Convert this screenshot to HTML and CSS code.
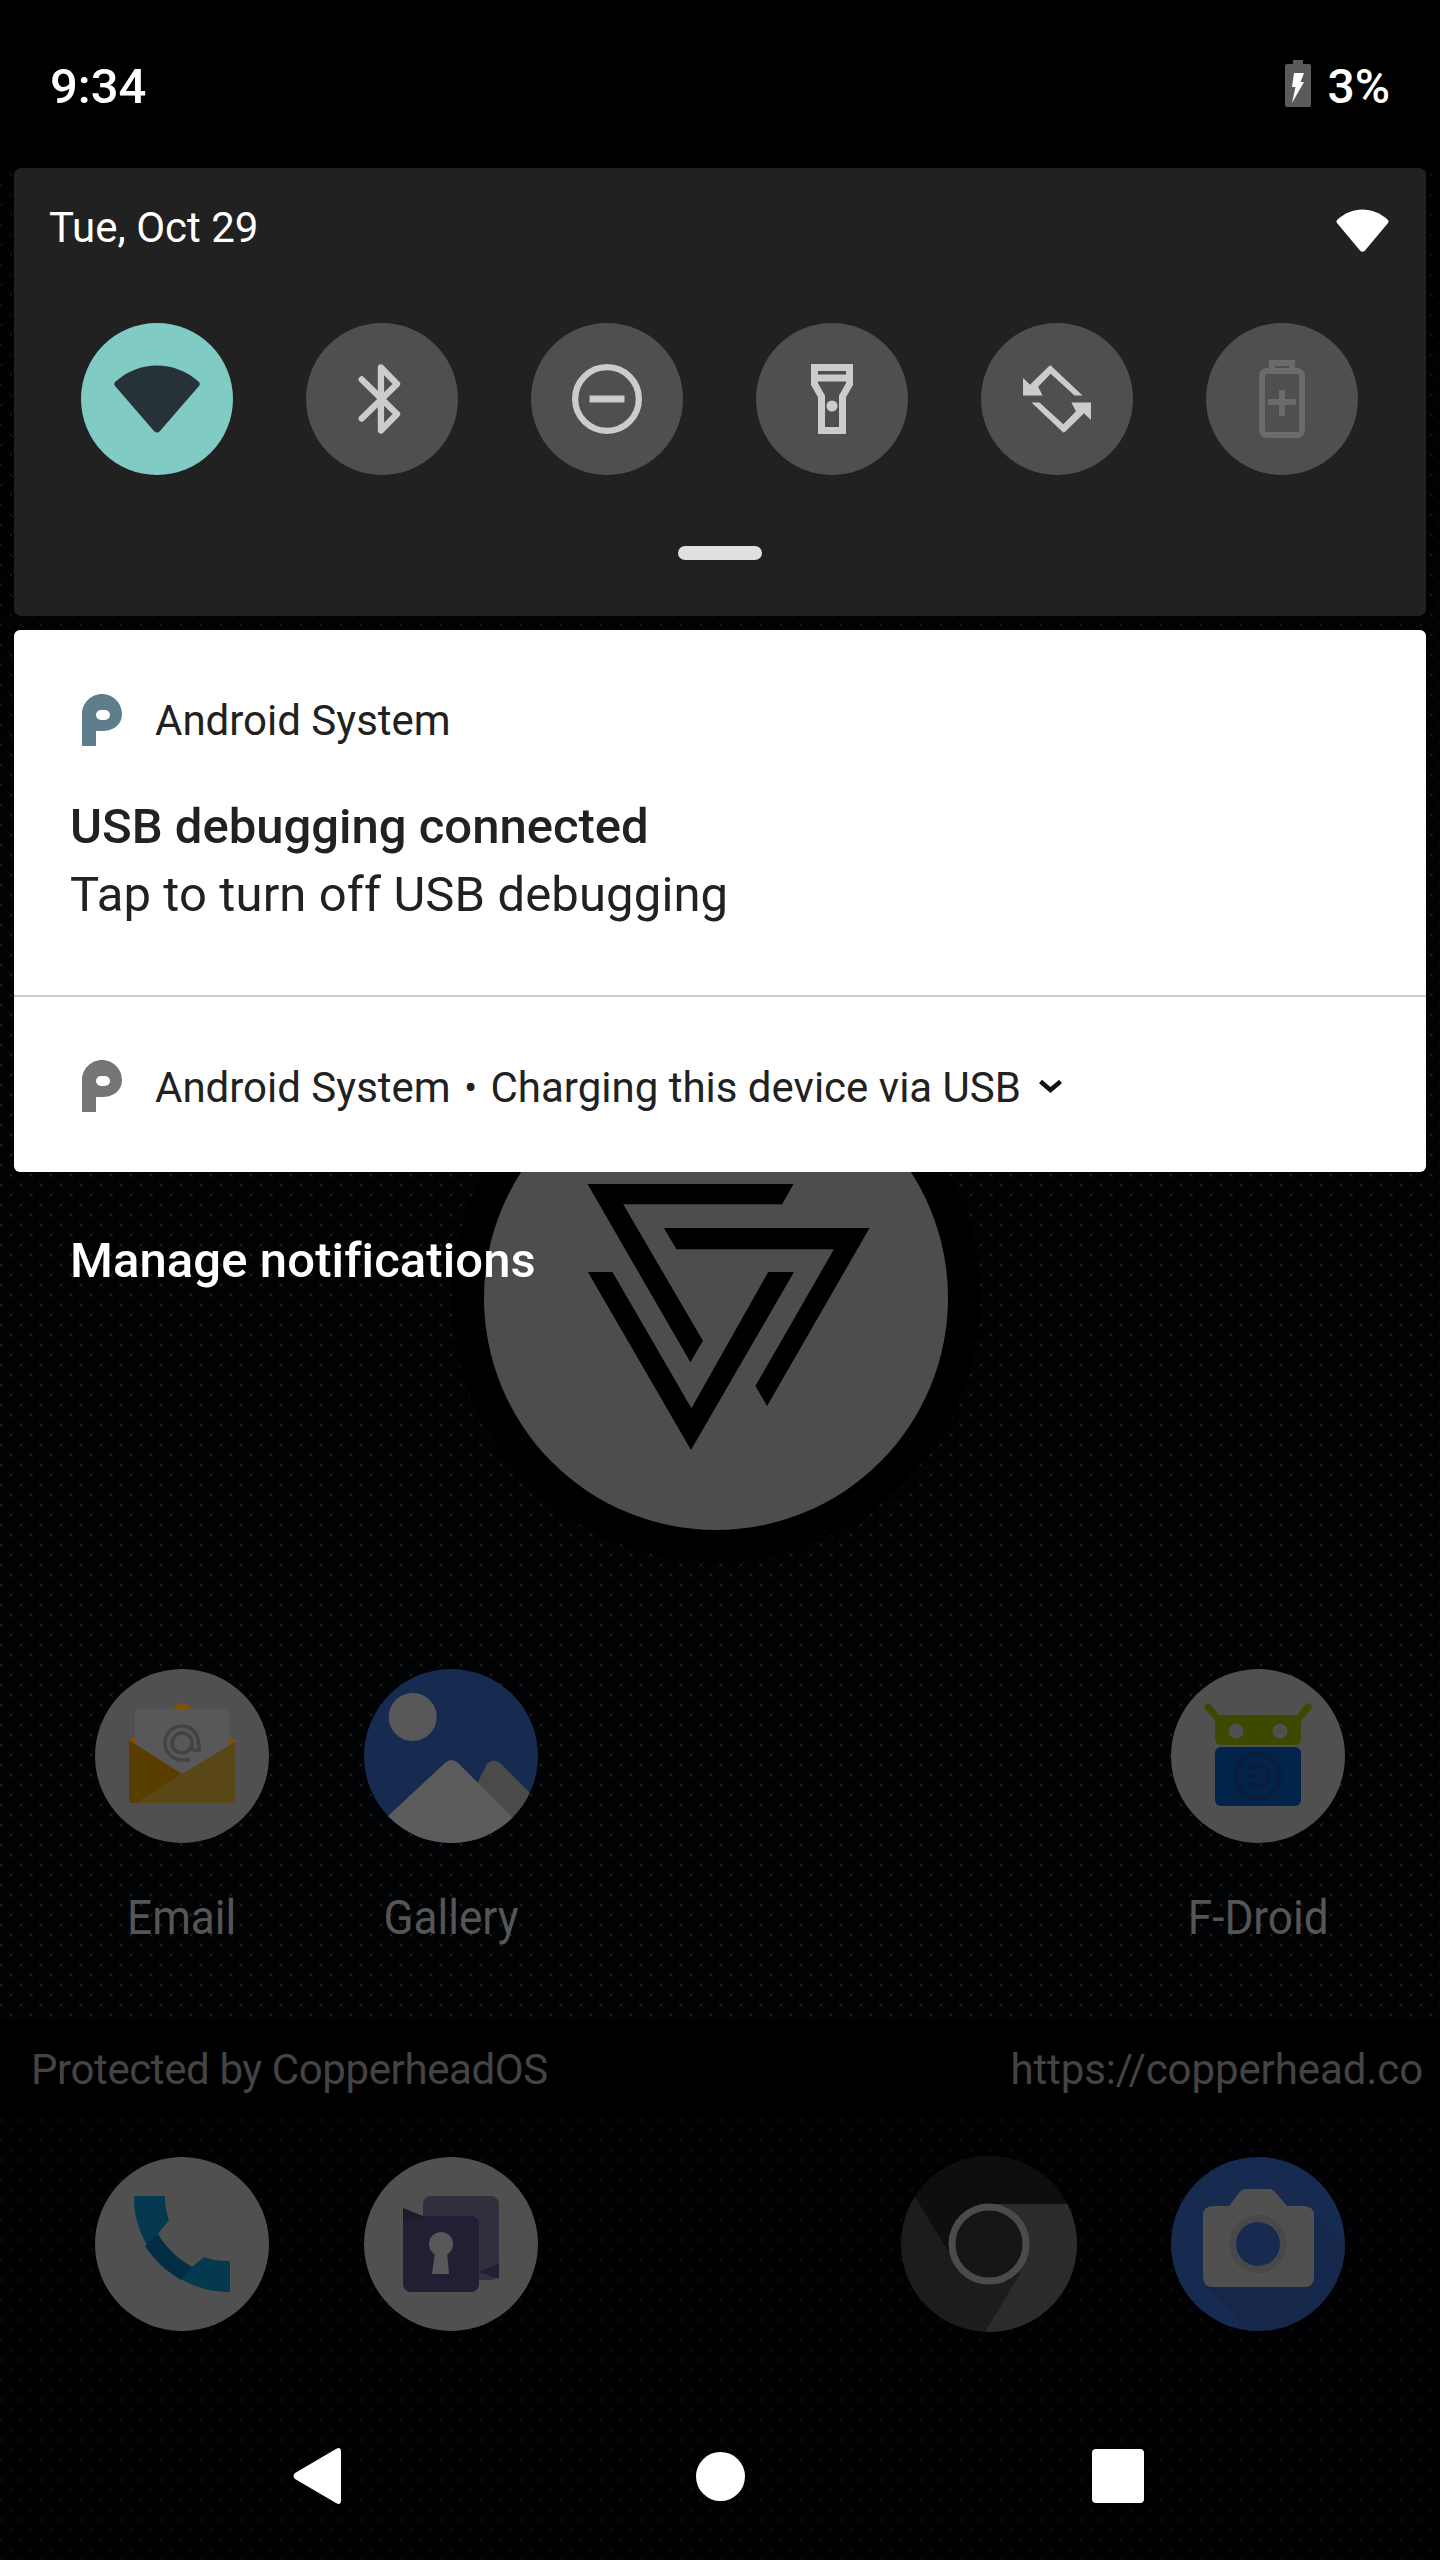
FILE: index.html
```html
<!DOCTYPE html>
<html lang="en">
<head>
<meta charset="utf-8">
<title>Notification shade</title>
<link rel="stylesheet" href="styles.css">
</head>
<body>
<div class="screen">
  <div class="home">
    <div class="wall">
      <div class="logo-ring">
        <svg class="logo" viewBox="484 1066 464 464" width="464" height="464">
          <polygon points="587.5,1184 793.6,1184 782.1,1204.3 623.2,1204.3 702.9,1340.7 690.4,1362.3"/>
          <polygon points="663.9,1228 869.6,1228 767.1,1406 755.4,1386 833.9,1249.3 676.4,1249.3"/>
          <polygon points="587.9,1272 612.5,1272 691.4,1408.3 768.2,1272 794,1272 691,1450"/>
        </svg>
      </div>
      <div class="app-row">
        <div class="app">
          <svg class="app-icon" viewBox="0 0 174 174" width="174" height="174">
            <circle cx="87" cy="87" r="87" fill="#505050"/>
            <path d="M34 72 L84 35 Q87 33 90 35 L140 72 V80 H34 Z" fill="#875000"/>
            <rect x="40" y="40" width="94" height="80" rx="5" fill="#585858"/>
            <circle cx="87" cy="74" r="10" fill="none" stroke="#434343" stroke-width="3.5"/>
            <path d="M97 74 v4 q0 5 7 3 q0 -24 -17 -24 a17 17 0 0 0 0 34 h8" fill="none" stroke="#434343" stroke-width="3.5"/>
            <path d="M34 71 L87 105 L41 134 H38 Q34 134 34 130 Z" fill="#5a3e00"/>
            <path d="M140 73 V130 Q140 134 136 134 H41 L87 105 Z" fill="#5a4716"/>
          </svg>
          <span class="app-label">Email</span>
        </div>
        <div class="app">
          <svg class="app-icon" viewBox="0 0 174 174" width="174" height="174">
            <defs><clipPath id="gal"><circle cx="87" cy="87" r="87"/></clipPath></defs>
            <g clip-path="url(#gal)">
              <rect width="174" height="174" fill="#172b50"/>
              <circle cx="48.7" cy="48" r="24" fill="#585858"/>
              <path d="M123 95 Q130 88 137 95 L190 148 V180 H80 Z" fill="#4a4a4a"/>
              <path d="M81 94 Q87.500 88 94 94 L160 160 V180 H10 V160 Z" fill="#5c5c5c"/>
            </g>
          </svg>
          <span class="app-label">Gallery</span>
        </div>
        <div class="app app-empty"></div>
        <div class="app app-empty"></div>
        <div class="app">
          <svg class="app-icon" viewBox="0 0 174 174" width="174" height="174">
            <circle cx="87" cy="87" r="87" fill="#505050"/>
            <path d="M37 38 L47 50 M137 38 L127 50" stroke="#3c4a00" stroke-width="7" stroke-linecap="round"/>
            <rect x="44" y="46" width="86" height="30" rx="6" fill="#3c4a00"/>
            <circle cx="65" cy="62" r="7.500" fill="#505050"/>
            <circle cx="109" cy="62" r="7.500" fill="#505050"/>
            <rect x="44" y="78" width="86" height="59" rx="6" fill="#03244a"/>
            <circle cx="87" cy="107" r="22" fill="none" stroke="#0a1d3c" stroke-width="4.500"/>
            <path d="M77 101 A11 11 0 1 1 77 113 M77 107 H90" fill="none" stroke="#0a1d3c" stroke-width="4.500"/>
          </svg>
          <span class="app-label">F-Droid</span>
        </div>
      </div>
    </div>
    <div class="search-band">
      <span class="search-left">Protected by CopperheadOS</span>
      <span class="search-right">https://copperhead.co</span>
    </div>
    <div class="dock">
      <div class="app-row">
        <svg class="app-icon" viewBox="0 0 174 174" width="174" height="174">
          <circle cx="87" cy="87" r="87" fill="#505050"/>
          <path d="M41 39 H68 a2 2 0 0 1 2 2 C70 48 71 55 74 63 L63 77 C69 89 84 103 97 110 L109 100 C117 103 125 104 133 104 a2 2 0 0 1 2 2 V133 a2 2 0 0 1 -2 2 C82 135 39 92 39 41 a2 2 0 0 1 2 -2 Z" fill="#04394f"/>
          <path d="M63 77 C69 89 84 103 97 110 L86 123 C71 114 59 103 50 89 Z" fill="#032c45"/>
        </svg>
        <svg class="app-icon" viewBox="0 0 174 174" width="174" height="174">
          <circle cx="87" cy="87" r="87" fill="#505050"/>
          <rect x="59" y="39" width="76" height="84" rx="8" fill="#322f3e"/>
          <polygon points="135,106 115,115 135,122" fill="#221e33"/>
          <rect x="39" y="59" width="76" height="76" rx="8" fill="#221e33"/>
          <polygon points="39,51 59,59 39,66" fill="#1d1a2e"/>
          <circle cx="77" cy="87" r="12" fill="#585858"/>
          <polygon points="71,95 83,95 85,117 68,117" fill="#585858"/>
        </svg>
        <div class="app-empty"></div>
        <svg class="app-icon" viewBox="0 0 176 176" width="176" height="176">
          <defs><clipPath id="chr"><circle cx="88" cy="88" r="88"/></clipPath></defs>
          <g clip-path="url(#chr)">
            <rect width="176" height="176" fill="#1c1c1c"/>
            <polygon points="14,41 49,98 88,48 176,48 176,0 0,0 0,20" fill="#0e0e0e"/>
            <polygon points="88,48 176,48 176,176 84,176 119,118" fill="#2b2b2b"/>
          </g>
          <circle cx="88" cy="88" r="37" fill="#151515" stroke="#4b4b4b" stroke-width="7"/>
        </svg>
        <svg class="app-icon" viewBox="0 0 174 174" width="174" height="174">
          <defs><clipPath id="cam"><circle cx="87" cy="87" r="87"/></clipPath></defs>
          <g clip-path="url(#cam)">
            <rect width="174" height="174" fill="#172b50"/>
            <polygon points="143,58 180,95 180,180 84,180 34,128" fill="#15274a"/>
          </g>
          <path d="M42 49 H58 L68 36 Q71 32 75 32 H98 Q102 32 105 36 L116 49 H133 Q143 49 143 59 V120 Q143 130 133 130 H42 Q32 130 32 120 V59 Q32 49 42 49 Z" fill="#505050"/>
          <circle cx="87" cy="87" r="29" fill="#484848"/>
          <circle cx="87" cy="87" r="22" fill="#172b50"/>
        </svg>
      </div>
    </div>
  </div>

  <div class="shade">
    <div class="status-bar">
      <span class="clock">9:34</span>
      <div class="status-right">
        <svg class="battery" viewBox="0 0 26 47" width="26" height="47">
          <path d="M8 0 H18 V4 H24 a2 2 0 0 1 2 2 V45 a2 2 0 0 1 -2 2 H2 a2 2 0 0 1 -2 -2 V6 a2 2 0 0 1 2 -2 H8 Z" fill="#5a5a5a"/>
          <path d="M9 13 H19 L15.500 22 H19 L7 43 L10.500 27 H7 Z" fill="#fff"/>
        </svg>
        <span class="percent">3%</span>
      </div>
    </div>

    <section class="qs-panel">
      <div class="qs-header">
        <span class="date">Tue, Oct 29</span>
        <svg class="wifi-small" viewBox="0 0 53 43" width="53" height="43">
          <path d="M1 11 C16 -3 37 -3 52 11 Q53 12.500 52 14 L29 41.500 Q26.500 44 24 41.500 L1 14 Q0 12.500 1 11 Z" fill="#fff"/>
        </svg>
      </div>
      <div class="qs-tiles">
        <div class="tile tile-on">
          <svg viewBox="0 0 86 68" width="86" height="68">
            <path d="M1 17 C25 -5 61 -5 85 17 Q86.500 19 85 21 L46 66 Q43 69 40 66 L1 21 Q-0.500 19 1 17 Z" fill="#263238"/>
          </svg>
        </div>
        <div class="tile">
          <svg viewBox="0 0 24 24" width="84" height="84">
            <path d="M6.200 6.400 L16.300 16.300 L11.700 21 V3 L16.300 7.700 L6.200 17.600" fill="none" stroke="#ccc" stroke-width="1.800" stroke-linejoin="round" stroke-linecap="round"/>
          </svg>
        </div>
        <div class="tile">
          <svg viewBox="0 0 24 24" width="84" height="84">
            <circle cx="12" cy="12" r="9.100" fill="none" stroke="#ccc" stroke-width="1.800"/>
            <rect x="7" y="11" width="10" height="2" fill="#ccc"/>
          </svg>
        </div>
        <div class="tile">
          <svg viewBox="0 0 24 24" width="84" height="84">
            <path fill-rule="evenodd" d="M6 2 H18 V8 L16 11.500 V22 H8 V11.500 L6 8 Z M8 4 V5 H16 V4 Z M8 7 V7.500 L10 11 V20 H14 V11 L16 7.500 V7 Z" fill="#ccc"/>
            <circle cx="12" cy="14" r="1.600" fill="#ccc"/>
          </svg>
        </div>
        <div class="tile">
          <svg viewBox="0 0 24 24" width="84" height="84">
            <path fill="#ccc" d="M10.200 2.400 L19.300 11 H17 L10.200 4.800 L6.600 8.500 L7.900 11 H2.300 V6 L4.300 7.900 L9.600 2.700 Q10.200 2.200 10.800 2.700 Z"/>
            <path fill="#ccc" transform="rotate(180 12 12)" d="M10.200 2.400 L19.300 11 H17 L10.200 4.800 L6.600 8.500 L7.900 11 H2.300 V6 L4.300 7.900 L9.600 2.700 Q10.200 2.200 10.800 2.700 Z"/>
          </svg>
        </div>
        <div class="tile">
          <svg viewBox="0 0 46 78" width="46" height="78">
            <path d="M13 11 V3 H33 V11" fill="none" stroke="#6b6b6b" stroke-width="6"/>
            <rect x="3" y="11" width="40" height="64" rx="5" fill="none" stroke="#6b6b6b" stroke-width="6"/>
            <path d="M9 42 H37 M23 30 V56" stroke="#6b6b6b" stroke-width="6"/>
          </svg>
        </div>
      </div>
      <div class="qs-handle"></div>
    </section>

    <section class="notif-card">
      <div class="notif-main">
        <div class="notif-head">
          <svg class="p-logo" viewBox="0 0 40 52" width="40" height="52">
            <path fill-rule="evenodd" d="M0 52 V20 C0 9 9 0 20 0 S40 9 40 20 31 37 20 37 H14 V52 Z M19 16 A5 5 0 0 0 19 26 H23 A5 5 0 0 0 23 16 Z" fill="#5f7e8b"/>
          </svg>
          <span class="notif-app">Android System</span>
        </div>
        <div class="notif-title">USB debugging connected</div>
        <div class="notif-body">Tap to turn off USB debugging</div>
      </div>
      <div class="notif-row">
        <svg class="p-logo" viewBox="0 0 40 52" width="40" height="52">
          <path fill-rule="evenodd" d="M0 52 V20 C0 9 9 0 20 0 S40 9 40 20 31 37 20 37 H14 V52 Z M19 16 A5 5 0 0 0 19 26 H23 A5 5 0 0 0 23 16 Z" fill="#757575"/>
        </svg>
        <span class="notif-app">Android System</span>
        <span class="notif-dot">•</span>
        <span class="notif-app">Charging this device via USB</span>
        <svg class="chevron" viewBox="0 0 25 14" width="25" height="14">
          <path d="M2.500 2.500 L12.500 11 L22.500 2.500" fill="none" stroke="#111" stroke-width="4.500"/>
        </svg>
      </div>
    </section>

    <div class="manage">Manage notifications</div>
  </div>

  <nav class="nav-bar">
    <svg viewBox="0 0 48 56" width="48" height="56">
      <path d="M43 1 Q48 -2 48 4 V52 Q48 58 43 55 L2 31 Q-1 28 2 25 Z" fill="#fff"/>
    </svg>
    <span class="nav-home"></span>
    <span class="nav-recent"></span>
  </nav>
</div>
</body>
</html>
```
FILE: styles.css
```css
* { box-sizing: border-box; }
html, body { margin: 0; padding: 0; background: #000; }
body { font-family: Roboto, "Liberation Sans", sans-serif; }

.screen {
  position: relative;
  width: 1440px;
  height: 2560px;
  overflow: hidden;
  background: #000;
}

/* home screen layer, under the notification shade */
.home {
  position: absolute;
  inset: 0;
  display: flex;
  flex-direction: column;
}
.wall {
  height: 2020px;
  display: flex;
  flex-direction: column;
  align-items: flex-start;
  padding-top: 1066px;
  background-color: #010203;
  background-image:
    linear-gradient(rgba(0, 0, 0, .6), rgba(0, 0, 0, 0) 1300px),
    url("data:image/svg+xml,%3Csvg xmlns='http://www.w3.org/2000/svg' width='20' height='20'%3E%3Cpath d='M2.5 2.5l5 5M7.500 2.500l-5 5M12.500 12.500l5 5M17.500 12.500l-5 5' stroke='%23121415' stroke-width='1' fill='none'/%3E%3Crect x='4' y='4' width='2' height='2' fill='%231e2022'/%3E%3Crect x='14' y='14' width='2' height='2' fill='%231e2022'/%3E%3C/svg%3E");
  background-position: 0 0, -4px 0;
}
.logo-ring {
  width: 464px;
  height: 464px;
  margin-left: 484px;
  border-radius: 50%;
  background: #4d4d4d;
  box-shadow: 0 0 0 32px #000;
}
.logo { display: block; fill: #000; }

.app-row {
  display: grid;
  grid-template-columns: repeat(5, 269px);
  justify-items: center;
  padding-left: 47.5px;
  width: 100%;
}
.wall .app-row { margin-top: 139px; }
.app {
  display: flex;
  flex-direction: column;
  align-items: center;
}
.app-icon { display: block; }
.app-label {
  margin-top: 46px;
  font-size: 49px;
  line-height: 58px;
  color: #555;
  transform: scaleX(.9);
  white-space: nowrap;
}

.search-band {
  height: 95px;
  background: #000;
  display: flex;
  justify-content: space-between;
  align-items: center;
  padding: 3px 17px 0 31px;
  font-size: 42px;
  color: #444;
}
.search-left { letter-spacing: -.4px; }
.search-right { letter-spacing: -.1px; }
.dock {
  flex: 1;
  padding-top: 41px;
  background-color: #010103;
  background-image:
    url("data:image/svg+xml,%3Csvg xmlns='http://www.w3.org/2000/svg' width='20' height='20'%3E%3Cpath d='M2.5 2.5l5 5M7.500 2.500l-5 5M12.500 12.500l5 5M17.500 12.500l-5 5' stroke='%23090a0e' stroke-width='1' fill='none'/%3E%3Crect x='4' y='4' width='2' height='2' fill='%230e0f14'/%3E%3Crect x='14' y='14' width='2' height='2' fill='%230e0f14'/%3E%3C/svg%3E");
  background-position: -4px 0;
}
.dock .app-row { align-items: center; }

/* notification shade */
.shade {
  position: relative;
  display: flex;
  flex-direction: column;
  padding: 0 14px;
}
.status-bar {
  height: 168px;
  margin: 0 -14px;
  padding: 4px 50px 0 50px;
  background: #000;
  display: flex;
  justify-content: space-between;
  align-items: center;
  color: #fff;
}
.clock {
  font-size: 49px;
  font-weight: 500;
}
.status-right {
  display: flex;
  align-items: center;
  gap: 16px;
}
.battery { display: block; margin-top: -5px; }
.percent {
  font-size: 48px;
  font-weight: 500;
}

.qs-panel {
  height: 448px;
  background: #212121;
  border-radius: 7px;
  display: flex;
  flex-direction: column;
}
.qs-header {
  height: 155px;
  padding: 35px 37px 0 35px;
  display: flex;
  justify-content: space-between;
  align-items: flex-start;
}
.date {
  font-size: 42px;
  line-height: 50px;
  color: #fff;
}
.wifi-small { display: block; margin-top: 6px; }
.qs-tiles {
  display: grid;
  grid-template-columns: repeat(6, 152px);
  column-gap: 73px;
  padding-left: 67px;
}
.tile {
  width: 152px;
  height: 152px;
  border-radius: 50%;
  background: #4f4f4f;
  display: flex;
  align-items: center;
  justify-content: center;
}
.tile-on { background: #80cbc4; }
.qs-handle {
  width: 84px;
  height: 14px;
  margin: 71px auto 0;
  border-radius: 7px;
  background: #e0e0e0;
}

.notif-card {
  margin-top: 14px;
  height: 542px;
  background: #fff;
  border-radius: 6px;
  overflow: hidden;
  color: #212121;
}
.notif-main {
  height: 367px;
  padding: 63px 56px 0;
  border-bottom: 2px solid #ccc;
}
.notif-head {
  display: flex;
  align-items: center;
  gap: 33px;
  padding-left: 12px;
}
.p-logo { display: block; flex: none; }
.notif-app {
  font-size: 42px;
  line-height: 52px;
}
.notif-head .notif-app { margin-top: 2px; }
.notif-title {
  margin-top: 49px;
  font-size: 49px;
  line-height: 62px;
  font-weight: 500;
}
.notif-body {
  margin-top: 6px;
  font-size: 49px;
  line-height: 62px;
  letter-spacing: .12px;
}
.notif-row {
  height: 175px;
  display: flex;
  align-items: center;
  padding: 3px 0 0 68px;
}
.notif-row .p-logo { margin-right: 33px; }
.notif-row .notif-app { margin-top: 3px; }
.notif-dot {
  font-size: 38px;
  margin: 3px 13.5px 0;
}
.chevron { margin-left: 17px; display: block; }

.manage {
  margin-top: 59px;
  padding-left: 56px;
  font-size: 49px;
  line-height: 60px;
  font-weight: 500;
  letter-spacing: .1px;
  color: #fff;
}

.nav-bar {
  position: absolute;
  left: 0;
  right: 0;
  bottom: 0;
  height: 168px;
  padding: 48px 296px 48px 293px;
  display: flex;
  justify-content: space-between;
  align-items: center;
}
.nav-home {
  width: 49px;
  height: 49px;
  margin-left: 7px;
  border-radius: 50%;
  background: #fff;
}
.nav-recent {
  width: 52px;
  height: 54px;
  border-radius: 4px;
  background: #fff;
}
```
